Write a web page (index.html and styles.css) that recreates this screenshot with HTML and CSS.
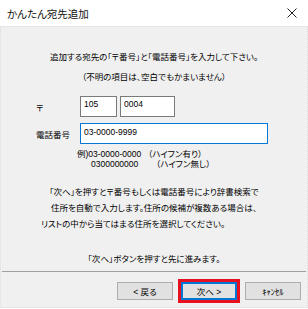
FILE: index.html
```html
<!DOCTYPE html>
<html lang="ja">
<head>
    <meta charset="UTF-8">
    <title>かんたん宛先追加</title>
    <link rel="stylesheet" href="styles.css">
</head>
<body>
    <div class="window">
        <div class="titlebar">
            <span class="title">かんたん宛先追加</span>
            <svg class="close" width="10" height="10" viewBox="0 0 10 10">
                <path d="M0.5 0.5 L9.5 9.5 M9.5 0.5 L0.5 9.5" stroke="#222" stroke-width="1" fill="none"/>
            </svg>
        </div>
        <div class="content">
            <div class="lead">
                <div>追加する宛先の「〒番号」と「電話番号」を入力して下さい。</div>
                <div>（不明の項目は、空白でもかまいません）</div>
            </div>

            <div class="row zip">
                <span class="label">〒</span>
                <input class="field zip1" type="text" value="105">
                <input class="field zip2" type="text" value="0004">
            </div>
            <div class="row tel">
                <span class="label">電話番号</span>
                <input class="field phone" type="text" value="03-0000-9999">
            </div>

            <div class="examples">
                <div class="ex ex1"><span class="num">例)03-0000-0000</span><span>（ハイフン有り）</span></div>
                <div class="ex ex2"><span class="num">0300000000</span><span>（ハイフン無し）</span></div>
            </div>

            <div class="info">
                <div class="center">「次へ」を押すと〒番号もしくは電話番号により辞書検索で</div>
                <div class="center">住所を自動で入力します。住所の候補が複数ある場合は、</div>
                <div class="last">リストの中から当てはまる住所を選択してください。</div>
            </div>

            <div class="hint">「次へ」ボタンを押すと先に進みます。</div>

            <div class="separator"></div>

            <div class="buttons">
                <button class="btn">&lt; 戻る</button>
                <button class="btn next">次へ &gt;</button>
                <button class="btn cancel">ｷｬﾝｾﾙ</button>
            </div>
        </div>
    </div>
</body>
</html>
```

FILE: styles.css
```css
html, body {
    margin: 0;
    padding: 0;
}
body {
    font-family: "Liberation Sans", "Noto Sans CJK JP", sans-serif;
    font-size: 8.5px;
    color: #000;
    font-feature-settings: "palt";
}
.window {
    width: 308px;
    height: 309px;
    background: #fff;
    overflow: hidden;
}
.titlebar {
    height: 26px;
    display: flex;
    align-items: center;
    justify-content: space-between;
    padding: 0 11px 0 7px;
}
.title {
    font-size: 10.5px;
    color: #111;
}
.close {
    display: block;
}
.content {
    height: 282px;
    background: #f0f0f0;
    border: 1px dotted #dcdcdc;
    border-top-color: #e8d8dc;
    box-sizing: border-box;
    position: relative;
}
.lead {
    padding-top: 20px;
    text-align: center;
    line-height: 20px;
}
.row {
    display: flex;
    align-items: center;
    padding-left: 35px;
}
.zip {
    margin-top: 9px;
}
.tel {
    margin-top: 6px;
}
.label {
    width: 44px;
}
.field {
    box-sizing: border-box;
    height: 21px;
    margin: 0;
    padding: 0 3px 5px;
    border: 1px solid #7a7a7a;
    background: #fff;
    font-family: "Liberation Sans", sans-serif;
    font-size: 8.5px;
    color: #000;
    outline: none;
}
.zip1 {
    width: 37px;
}
.zip2 {
    width: 55px;
    margin-left: 3px;
}
.phone {
    width: 188px;
    border-color: #0078d7;
    padding-bottom: 3px;
}
.examples {
    margin-top: 5px;
    line-height: 10px;
}
.ex1 {
    padding-left: 76px;
}
.ex1 .num {
    display: inline-block;
    width: 71px;
}
.ex2 {
    padding-left: 90px;
}
.ex2 .num {
    display: inline-block;
    width: 65px;
}
.info {
    margin-top: 15px;
    line-height: 16px;
}
.center {
    text-align: center;
}
.last {
    padding-left: 40px;
}
.hint {
    margin-top: 19px;
    line-height: 16px;
    text-align: center;
}
.separator {
    margin: 4px 1px 0;
    height: 1px;
    background: #a0a0a0;
}
.buttons {
    display: flex;
    justify-content: flex-end;
    gap: 8px;
    padding: 10px 6px 0 0;
}
.btn {
    width: 56px;
    height: 18px;
    padding: 0;
    background: #e1e1e1;
    border: 1px solid #adadad;
    font-family: "Liberation Sans", "Noto Sans CJK JP", sans-serif;
    font-size: 8.5px;
    color: #000;
    font-feature-settings: "palt";
}
.next {
    position: relative;
    border-color: #0078d7;
    box-shadow: inset 0 0 0 1px #0078d7;
}
.next::after {
    content: "";
    position: absolute;
    left: -4px;
    top: -4px;
    right: -4px;
    bottom: -4px;
    border: 3px solid #e8101e;
}
```
